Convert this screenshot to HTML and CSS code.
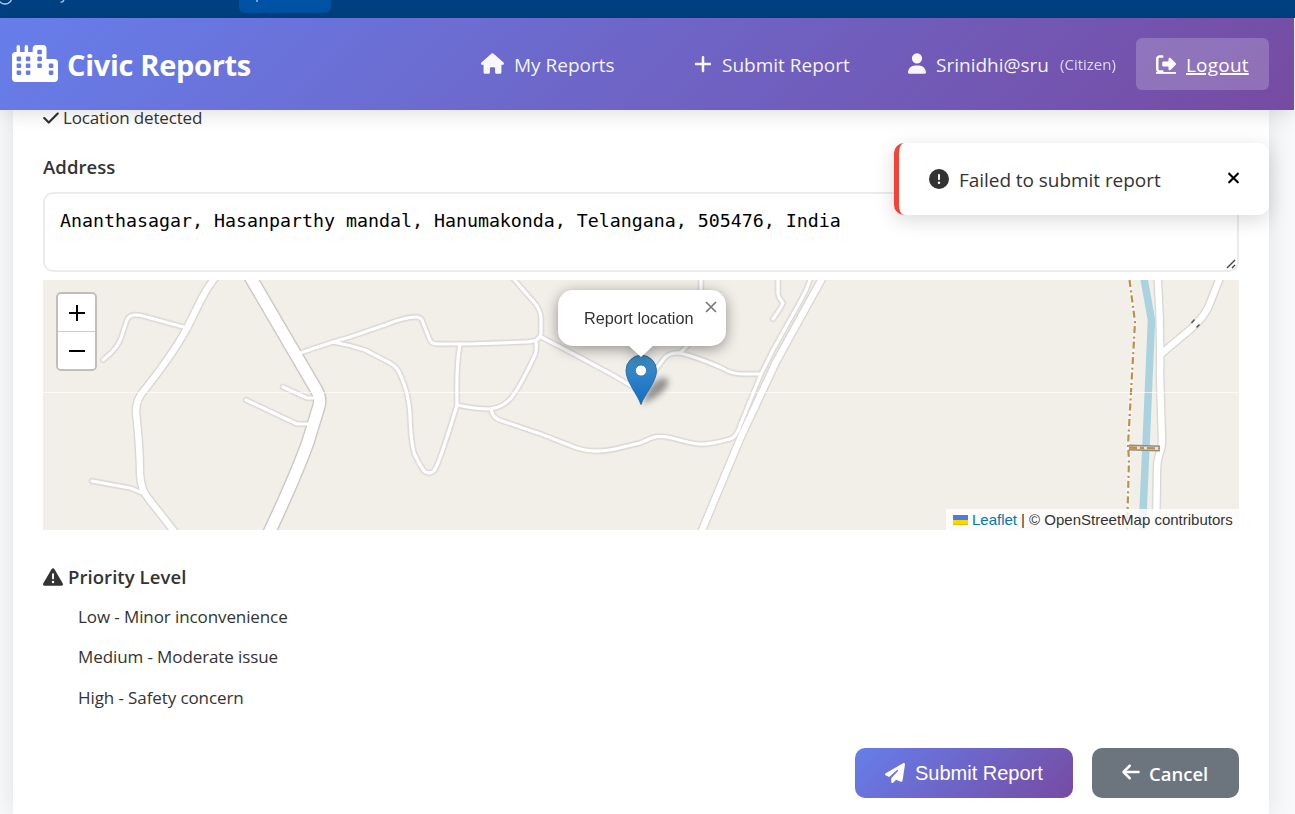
FILE: index.html
```html
<!DOCTYPE html>
<html lang="en">
<head>
<meta charset="utf-8">
<title>Civic Reports</title>
<link rel="stylesheet" href="styles.css">
</head>
<body>
<div class="topbar">
  <svg class="topbar-marks" viewBox="0 0 200 18"><circle cx="5" cy="-3" r="7" fill="none" stroke="#b4cde5" stroke-width="1.3"/><path d="M64 0l-1.500 2-2 .2M257 0v2" fill="none" stroke="#b4cde5" stroke-width="1.300"/></svg>
  <span class="topbar-tab"></span>
</div>
<header class="nav">
  <a class="brand">
    <svg class="brand-icon" viewBox="0 0 640 512"><path fill-rule="evenodd" d="M480 48c0-26.500-21.500-48-48-48H336c-26.500 0-48 21.500-48 48V96H224V24c0-13.300-10.700-24-24-24s-24 10.700-24 24V96H112V24c0-13.300-10.700-24-24-24S64 10.700 64 24V96H48C21.500 96 0 117.500 0 144V464c0 26.500 21.500 48 48 48H592c26.500 0 48-21.500 48-48V240c0-26.500-21.500-48-48-48H480V48zM80 160h32q16 0 16 16v32q0 16-16 16H80q-16 0-16-16v-32q0-16 16-16zM80 256h32q16 0 16 16v32q0 16-16 16H80q-16 0-16-16v-32q0-16 16-16zM80 352h32q16 0 16 16v32q0 16-16 16H80q-16 0-16-16v-32q0-16 16-16zM208 160h32q16 0 16 16v32q0 16-16 16h-32q-16 0-16-16v-32q0-16 16-16zM208 256h32q16 0 16 16v32q0 16-16 16h-32q-16 0-16-16v-32q0-16 16-16zM208 352h32q16 0 16 16v32q0 16-16 16h-32q-16 0-16-16v-32q0-16 16-16zM368 64h32q16 0 16 16v32q0 16-16 16h-32q-16 0-16-16V80q0-16 16-16zM368 160h32q16 0 16 16v32q0 16-16 16h-32q-16 0-16-16v-32q0-16 16-16zM368 256h32q16 0 16 16v32q0 16-16 16h-32q-16 0-16-16v-32q0-16 16-16zM528 256h32q16 0 16 16v32q0 16-16 16h-32q-16 0-16-16v-32q0-16 16-16zM528 352h32q16 0 16 16v32q0 16-16 16h-32q-16 0-16-16v-32q0-16 16-16z"/></svg>
    <span class="brand-name">Civic Reports</span>
  </a>
  <nav class="links">
    <a class="link"><svg class="ic-home" viewBox="0 0 576 512"><path d="M575.8 255.5c0 18-15 32.1-32 32.1h-32l.7 160.200c0 2.700-.2 5.400-.5 8.100V472c0 22.100-17.900 40-40 40H392c-22.100 0-40-17.900-40-40V384c0-17.700-14.300-32-32-32H256c-17.700 0-32 14.300-32 32v88c0 22.100-17.900 40-40 40H104c-22.100 0-40-17.900-40-40V287.600H32c-18 0-32-14-32-32.100c0-9 3-17 10-24L266.400 8c7-7 15-8 22-8s15 2 21 7L564.800 231.500c8 7 12 15 11 24z"/></svg><span class="t-my">My Reports</span></a>
    <a class="link"><svg class="ic-plus" viewBox="0 0 448 512"><path d="M256 80c0-17.700-14.300-32-32-32s-32 14.300-32 32V224H48c-17.700 0-32 14.300-32 32s14.300 32 32 32H192V432c0 17.700 14.300 32 32 32s32-14.300 32-32V288H400c17.700 0 32-14.300 32-32s-14.300-32-32-32H256V80z"/></svg><span class="t-sub">Submit Report</span></a>
    <span class="link user"><svg class="ic-user" viewBox="0 0 448 512"><path d="M224 256A128 128 0 1 0 224 0a128 128 0 1 0 0 256zm-45.700 48C79.800 304 0 383.800 0 482.300C0 498.700 13.300 512 29.700 512H418.300c16.400 0 29.700-13.300 29.700-29.700C448 383.800 368.200 304 269.700 304H178.300z"/></svg><span class="t-user">Srinidhi@sru</span><small class="role">(Citizen)</small></span>
    <a class="logout"><svg class="ic-out" viewBox="0 0 512 512"><path d="M377.900 105.900L500.700 228.700c7.200 7.200 11.300 17.100 11.300 27.300s-4.100 20.100-11.300 27.300L377.900 406.100c-6.400 6.400-15 9.900-24 9.900c-18.700 0-33.900-15.200-33.900-33.900l0-62.100-128 0c-17.700 0-32-14.300-32-32l0-64c0-17.700 14.300-32 32-32l128 0 0-62.100c0-18.700 15.200-33.900 33.900-33.900c9 0 17.600 3.600 24 9.900zM160 96L96 96c-17.700 0-32 14.300-32 32l0 256c0 17.700 14.300 32 32 32l64 0c17.700 0 32 14.300 32 32s-14.300 32-32 32l-64 0c-53 0-96-43-96-96L0 128C0 75 43 32 96 32l64 0c17.700 0 32 14.300 32 32s-14.300 32-32 32z"/><path d="M0 460h512v48H0z"/></svg><span class="t-out">Logout</span></a>
  </nav>
</header>

<main class="page">
  <section class="card">
    <p class="detected"><svg class="ic-check" viewBox="0 0 448 512"><path d="M438.600 105.400c12.500 12.500 12.500 32.800 0 45.300l-256 256c-12.500 12.500-32.800 12.500-45.300 0l-128-128c-12.500-12.500-12.500-32.800 0-45.300s32.800-12.500 45.300 0L160 338.700 393.400 105.400c12.500-12.500 32.800-12.500 45.300 0z"/></svg><span>Location detected</span></p>
    <h2 class="label">Address</h2>
    <div class="address">
      <span>Ananthasagar, Hasanparthy mandal, Hanumakonda, Telangana, 505476, India</span>
      <svg class="grip" viewBox="0 0 10 10"><path d="M1 9L9 1M6 9L9 6" stroke="#444" stroke-width="1.400" fill="none"/></svg>
    </div>

    <div class="map">
      <svg class="tiles" viewBox="43 280 1196 250">
        <defs>
          <g id="minor" fill="none" stroke-linecap="round" stroke-linejoin="round">
            <path d="M103 360L111 353Q118 346 121 338L127 320Q129 315 135 315Q139 315 143 316L187 328"/>
            <path d="M92 481L130 488L145 494"/>
            <path d="M283 387L307 398H315"/>
            <path d="M246 400L297 424H309"/>
            <path d="M300 353L333 342L350 337L385 325Q405 317 416 317Q420 317 422 320L429 338Q431 344 437 344H470L525 342Q541 342 541 332V318Q541 310 533 301L511 276"/>
            <path d="M333 342Q350 345 365 350L390 363Q397 367 400 374Q409 393 410 415Q411 446 415 455Q419 464 424 471Q429 475 434 471Q440 462 457 405"/>
            <path d="M460 344Q456 365 457 405Q475 409 490 409Q502 408 511 398Q519 389 535 355Q537 350 536 341"/>
            <path d="M541 337L570 352L611 374L640 391"/>
            <path d="M491 409Q492 418 502 421Q538 432 574 447Q593 454 615 449L640 443C652 438 655 434 672 438C697 445 701 447 730 439Q737 437 741 423L761 374L773 350L802 298Q808 288 811 276"/>
            <path d="M645 388Q652 374 663 360Q668 352 680 353Q697 357 722 368Q732 374 742 374H761"/>
            <path d="M680 353L694 339Q701 333 701 325V276"/>
            <path d="M778 276V293Q778 297 783 303Q781 308 773 319"/>
          </g>
          <g id="mid" fill="none" stroke-linejoin="round">
            <path d="M217 275Q205 290 196 310L186 330Q171 357 142 393Q136 401 136 412Q140 450 140 474Q141 490 148 498L177 535"/>
            <path d="M824 275L776 362L740 439L700 535"/>
            <path d="M1157.500 275Q1161 325 1160 375L1162 440Q1162 448 1159 455Q1157 462 1157 470L1156 535"/>
            <path d="M1221 275L1208 308Q1201 322 1180 338L1161 354"/>
          </g>
          <path id="wide" d="M248 273L317 391Q321 398 319 406L308 442Q295 478 268 535" fill="none"/>
          <linearGradient id="pin" x1="0" y1="0" x2="0" y2="1"><stop stop-color="#4190c8"/><stop offset="1" stop-color="#126fc6"/></linearGradient>
          <filter id="soft" x="-50%" y="-50%" width="200%" height="200%"><feGaussianBlur stdDeviation="3"/></filter>
        </defs>
        <rect x="43" y="280" width="1196" height="250" fill="#f2efe9"/>
        <path d="M1143.500 276L1151.500 320L1146 445L1142 535" fill="none" stroke="#aad3df" stroke-width="7.500"/>
        <use href="#minor" stroke="#e6e4e0" stroke-width="7"/>
        <use href="#minor" stroke="#dad9d6" stroke-width="5.400"/>
        <use href="#mid" stroke="#e2e0dc" stroke-width="9.400"/>
        <use href="#mid" stroke="#d4d3d1" stroke-width="8"/>
        <use href="#wide" stroke="#dddbd7" stroke-width="14.500"/>
        <use href="#wide" stroke="#c4c3c1" stroke-width="13.200"/>
        <use href="#minor" stroke="#fff" stroke-width="3.200"/>
        <use href="#mid" stroke="#fff" stroke-width="6.400"/>
        <use href="#wide" stroke="#fff" stroke-width="11.300"/>
        <path d="M1129.500 280L1135 322L1128 445L1129 460L1127 530" fill="none" stroke="#fff" stroke-opacity=".5" stroke-width="3.500"/>
        <path d="M1129.500 280L1135 322L1128 445L1129 460L1127 530" fill="none" stroke="#b8914a" stroke-width="2.200" stroke-dasharray="7 3.500 2 3"/>
        <path d="M1129 447.500L1160 448.500" stroke="#8f8c85" stroke-width="6"/>
        <path d="M1129 447.500L1160 448.500" stroke="#e9e3d8" stroke-width="3"/>
        <path d="M1129 447.500L1160 448.500" stroke="#b8914a" stroke-width="2.400" stroke-dasharray="8 3 4 3"/>
        <path d="M1191.500 323L1194.500 319.500M1196.500 327.500L1199.500 324.500" stroke="#555" stroke-width="1.500"/>
        <path d="M43 392.500H1239" stroke="#fff" stroke-opacity=".65"/>
        <path d="M643 402Q652 376 667 378Q673 389 643 404Z" opacity=".5" filter="url(#soft)"/>
        <path d="M641 404.500C638 395 626 382 626 370.500A15.200 15.200 0 0 1 656.500 370.500C656.500 382 644 395 641 404.500Z" fill="url(#pin)" stroke="#2e6c97"/>
        <circle cx="641" cy="370.500" r="5.600" fill="#fff" stroke="#2e7cb5"/>
      </svg>
      <div class="zoom"><span><svg viewBox="0 0 16 16"><path d="M0 8H16M8 0V16"/></svg></span><span><svg viewBox="0 0 16 16"><path d="M0 8H16"/></svg></span></div>
      <div class="popup"><span>Report location</span><svg class="popup-close" viewBox="0 0 12 12"><path d="M1 1L11 11M11 1L1 11"/></svg></div>
      <div class="credit"><svg viewBox="0 0 15 10"><path fill="#4c7be1" d="M0 0h15v5H0z"/><path fill="#ffd500" d="M0 5h15v4H0z"/><path fill="#e0bc00" d="M0 9h15v1H0z"/></svg><a>Leaflet</a><span>| © OpenStreetMap contributors</span></div>
    </div>

    <h2 class="label priority"><svg class="ic-warn" viewBox="0 0 512 512"><path d="M256 32c14.200 0 27.300 7.500 34.500 19.800l216 368c7.300 12.400 7.300 27.700 .2 40.100S486.300 480 472 480H40c-14.300 0-27.600-7.700-34.700-20.100s-7-27.800 .2-40.100l216-368C228.700 39.500 241.800 32 256 32zm0 128c-13.300 0-24 10.700-24 24V296c0 13.300 10.700 24 24 24s24-10.700 24-24V184c0-13.300-10.700-24-24-24zm32 224a32 32 0 1 0 -64 0 32 32 0 1 0 64 0z"/></svg><span>Priority Level</span></h2>
    <ul class="options">
      <li>Low - Minor inconvenience</li>
      <li>Medium - Moderate issue</li>
      <li>High - Safety concern</li>
    </ul>
    <div class="actions">
      <button class="btn submit"><svg class="ic-send" viewBox="0 0 512 512"><path d="M498.100 5.600c10.100 7 15.400 19.100 13.500 31.200l-64 416c-1.500 9.700-7.400 18.200-16 23s-18.900 5.400-28 1.600L284 427.700l-68.500 74.100c-8.900 9.700-22.900 12.900-35.200 8.100S160 493.200 160 480V396.400c0-4 1.500-7.800 4.200-10.700L331.800 202.800c5.800-6.300 5.600-16-.4-22s-15.700-6.400-22-.7L106 360.800 17.700 316.600C7.100 311.300 .3 300.700 0 288.900s5.900-22.800 16.100-28.700l448-256c10.700-6.100 23.900-5.500 34 1.400z"/></svg><span>Submit Report</span></button>
      <button class="btn cancel"><svg class="ic-back" viewBox="0 0 448 512"><path d="M9.400 233.400c-12.500 12.500-12.500 32.800 0 45.300l160 160c12.500 12.500 32.800 12.500 45.300 0s12.500-32.800 0-45.300L109.200 288 416 288c17.700 0 32-14.300 32-32s-14.300-32-32-32l-306.700 0L214.600 118.600c12.500-12.500 12.500-32.800 0-45.300s-32.800-12.500-45.300 0l-160 160z"/></svg><span>Cancel</span></button>
    </div>
  </section>
</main>

<div class="toast">
  <svg class="ic-alert" viewBox="0 0 512 512"><path d="M256 512A256 256 0 1 0 256 0a256 256 0 1 0 0 512zm0-384c13.300 0 24 10.700 24 24V264c0 13.300-10.700 24-24 24s-24-10.700-24-24V152c0-13.300 10.700-24 24-24zM224 352a32 32 0 1 1 64 0 32 32 0 1 1 -64 0z"/></svg>
  <span class="toast-text">Failed to submit report</span>
  <svg class="ic-x" viewBox="0 0 384 512"><path d="M342.600 150.600c12.500-12.500 12.500-32.800 0-45.300s-32.800-12.500-45.300 0L192 210.700 86.600 105.400c-12.500-12.500-32.800-12.500-45.300 0s-12.500 32.800 0 45.300L146.700 256 41.400 361.400c-12.500 12.500-12.500 32.800 0 45.300s32.800 12.500 45.300 0L192 301.300 297.400 406.600c12.500 12.500 32.800 12.500 45.300 0s12.500-32.800 0-45.300L237.300 256 342.600 150.600z"/></svg>
</div>
</body>
</html>
```

FILE: styles.css
```css
* { box-sizing: border-box; }
body {
  margin: 0;
  height: 814px;
  overflow: hidden;
  position: relative;
  display: flex;
  flex-direction: column;
  background: #f8f9fa;
  color: #333;
  font-family: "Open Sans", "Noto Sans", sans-serif;
  font-size: 17px;
}
svg { display: block; flex: none; fill: currentColor; }
span, li, small { white-space: nowrap; }

.topbar { height: 18px; flex: none; background: #004182; display: flex; overflow: hidden; }
.topbar-marks { width: 200px; height: 18px; overflow: visible; z-index: 1; }
.topbar-tab { width: 92px; height: 13px; margin-left: 39px; background: #0053a6; border-radius: 0 0 6px 6px; }

.nav {
  height: 92px;
  flex: none;
  margin-right: 1px;
  padding: 0 25px 0 12px;
  display: flex;
  align-items: center;
  justify-content: space-between;
  background: linear-gradient(135deg, #667eea, #764ba2);
  box-shadow: 0 2px 20px rgba(0, 0, 0, .15);
  color: #fff;
  position: relative;
  z-index: 1;
}
.brand { display: flex; align-items: center; gap: 9px; }
.brand-icon { width: 46px; height: 37px; margin-top: -1px; }
.brand-name { font-size: 29px; font-weight: 700; line-height: 40px; letter-spacing: -.3px; margin-top: 2px; }
.links { display: flex; align-items: center; }
.link { display: flex; align-items: center; width: 214px; font-size: 19px; color: rgba(255, 255, 255, .95); }
.link span, .logout span { line-height: 28px; padding-top: 2px; }
.user { width: 228px; }
.ic-home { width: 23px; height: 21px; margin: -1px 10px 0 1px; }
.ic-plus { width: 18px; height: 20px; margin: 0 10px 0 0; }
.ic-user { width: 18px; height: 21px; margin: -1px 10px 0 0; }
.role { font-size: 15px; opacity: .8; margin-left: 11px; }
.logout {
  width: 133px;
  height: 52px;
  padding-left: 20px;
  display: flex;
  align-items: center;
  border-radius: 6px;
  background: rgba(255, 255, 255, .2);
  font-size: 19px;
  text-decoration: underline;
  text-decoration-thickness: 2px;
}
.t-out { letter-spacing: .2px; }
.ic-out { width: 20px; height: 20px; margin: 0 10px 0 0; }

.page { flex: 1; padding: 0 26px 0 13px; }
.card {
  height: 704px;
  padding: 0 30px;
  background: #fff;
  box-shadow: 0 0 25px rgba(0, 0, 0, .1);
}
.detected { margin: 0; height: 15px; display: flex; align-items: center; gap: 4px; font-size: 17px; letter-spacing: -.15px; }
.ic-check { width: 16px; height: 18px; }
.label { margin: 0; font-size: 18.500px; font-weight: 600; line-height: 28px; letter-spacing: .07px; }
.detected + .label { margin-top: 28px; }
.address {
  height: 80px;
  margin-top: 11px;
  padding: 14px 15px;
  border: 2px solid #e9ecef;
  border-radius: 10px;
  position: relative;
  color: #000;
  font: 18.270px/26px "DejaVu Sans Mono", monospace;
}
.grip { position: absolute; right: 1px; bottom: 1px; width: 10px; height: 10px; }

.map { position: relative; height: 250px; margin-top: 8px; overflow: hidden; font-family: "Liberation Sans", Arial, sans-serif; }
.tiles { width: 1196px; height: 250px; }
.zoom {
  position: absolute;
  left: 13px;
  top: 12px;
  width: 41px;
  border: 2px solid rgba(0, 0, 0, .2);
  background-clip: padding-box;
  border-radius: 5px;
  overflow: hidden;
}
.zoom span { height: 37px; display: flex; align-items: center; justify-content: center; background: #fff; }
.zoom span + span { border-top: 1px solid #ccc; height: 38px; }
.zoom span:first-child { padding-top: 1px; }
.zoom svg { width: 16px; height: 16px; stroke: #000; stroke-width: 2; }
.popup {
  position: absolute;
  left: 515px;
  top: 10px;
  width: 168px;
  height: 56px;
  padding-left: 26px;
  display: flex;
  align-items: center;
  border-radius: 15px;
  background: #fff;
  filter: drop-shadow(0 3px 7px rgba(0, 0, 0, .4));
  font-size: 16.300px;
}
.popup::after {
  content: "";
  position: absolute;
  left: 70px;
  top: 55px;
  border: 13px solid transparent;
  border-top: 12px solid #fff;
  border-bottom: 0;
}
.popup-close { position: absolute; right: 9px; top: 11px; width: 12px; height: 12px; stroke: #757575; stroke-width: 1.600; }
.credit {
  position: absolute;
  right: 0;
  bottom: 0;
  height: 21px;
  width: 293px;
  padding-left: 7px;
  display: flex;
  align-items: center;
  gap: 4px;
  background: rgba(255, 255, 255, .8);
  font-size: 15px;
}
.credit svg { width: 15px; height: 10px; }
.credit a { color: #0078a8; }

.priority { margin-top: 33px; display: flex; align-items: center; gap: 5px; }
.ic-warn { width: 20px; height: 20px; margin-top: -1px; }
.options { list-style: none; margin: 7px 0 0; padding: 0 0 0 35px; }
.options li { height: 40.300px; line-height: 38px; font-size: 17px; letter-spacing: -.1px; }
.actions { display: flex; justify-content: flex-end; gap: 19px; margin-top: 29px; }
.btn { height: 50px; border: 0; padding: 0 0 0 30px; border-radius: 10px; display: flex; align-items: center; color: #fff; font-family: "Liberation Sans", Arial, sans-serif; font-size: 20px; }
.submit { width: 218px; background: linear-gradient(135deg, #667eea, #764ba2); }
.cancel { width: 147px; background: #6c757d; font-family: "Open Sans", sans-serif; font-weight: 600; font-size: 18.500px; }
.submit span { margin-top: 1px; }
.ic-send { width: 20px; height: 20px; margin-right: 10px; }
.ic-back { width: 18px; height: 20px; margin: -2px 9px 0 0; }
.cancel span { margin-top: 1px; }

.toast {
  position: absolute;
  z-index: 2;
  left: 894px;
  top: 143px;
  width: 375px;
  height: 72px;
  padding: 0 29px 0 30px;
  display: flex;
  align-items: center;
  background: #fff;
  border-left: 5px solid #f44336;
  border-radius: 10px;
  box-shadow: 0 5px 20px rgba(0, 0, 0, .15);
  font-size: 19px;
}
.ic-alert { width: 20px; height: 20px; margin: -1px 10px 0 0; }
.toast-text { flex: 1; padding-top: 1px; letter-spacing: -.05px; }
.ic-x { width: 13px; height: 18px; margin-top: -2px; color: #000; }
```
